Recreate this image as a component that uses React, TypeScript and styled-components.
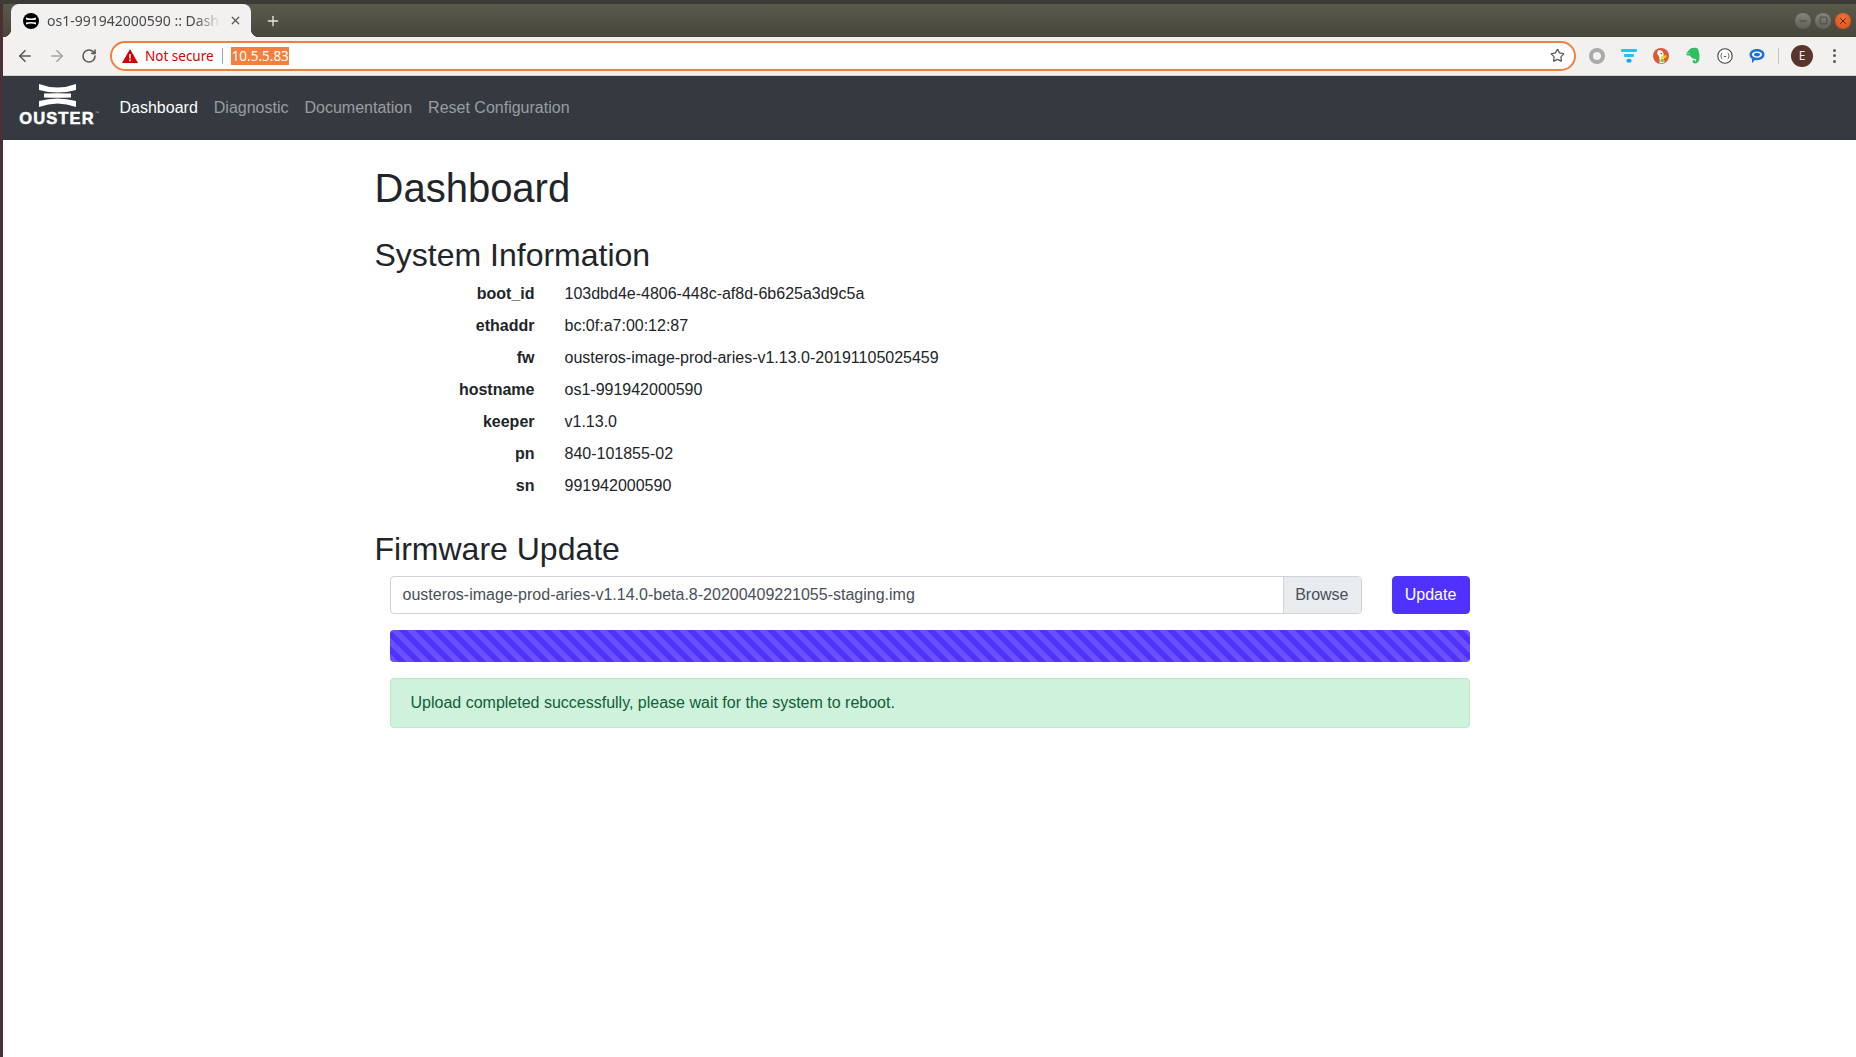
import React from "react";
import styled, { createGlobalStyle } from "styled-components";
import { ArrowLeft, ArrowRight, RotateCw, Star, X, Plus, Minus, Square } from "lucide-react";

const GlobalStyle = createGlobalStyle`
  html, body {
    margin: 0;
    padding: 0;
    height: 100%;
    overflow: hidden;
    background: #fff;
  }
  #root { height: 100%; }
`;

const Screen = styled.div`
  display: flex;
  width: 1856px;
  height: 1057px;
  background: #fff;
`;

const DesktopEdge = styled.div`
  width: 3px;
  flex: none;
  box-sizing: border-box;
  border-top: 4px solid #3c3b37;
  background: #4a2f36;
`;

const Browser = styled.div`
  flex: 1;
  min-width: 0;
  display: flex;
  flex-direction: column;
`;

const TitleBar = styled.div`
  height: 37px;
  flex: none;
  box-sizing: border-box;
  border-top: 4px solid #3c3b37;
  display: flex;
  align-items: flex-end;
  background: linear-gradient(#5a5a4c, #46463c);
`;

const Tab = styled.div`
  position: relative;
  width: 240px;
  height: 33px;
  margin-left: 8px;
  box-sizing: border-box;
  padding: 0 9px 0 12px;
  display: flex;
  align-items: center;
  gap: 8px;
  background: #f2f1f0;
  border-radius: 8px 8px 0 0;
  font: 14px "Noto Sans", sans-serif;
  color: #45494e;

  &::before,
  &::after {
    content: "";
    position: absolute;
    bottom: 0;
    width: 8px;
    height: 8px;
  }
  &::before {
    left: -8px;
    background: radial-gradient(circle at 0 0, transparent 8px, #f2f1f0 8.5px);
  }
  &::after {
    right: -8px;
    background: radial-gradient(circle at 100% 0, transparent 8px, #f2f1f0 8.5px);
  }
`;

const TabTitle = styled.span`
  flex: 1;
  overflow: hidden;
  white-space: nowrap;
  -webkit-mask-image: linear-gradient(90deg, #000 85%, transparent 100%);
  mask-image: linear-gradient(90deg, #000 85%, transparent 100%);
`;

const Favicon = styled.svg`
  width: 16px;
  height: 16px;
  flex: none;
`;

const NewTab = styled.div`
  width: 20px;
  height: 33px;
  margin-left: 12px;
  display: flex;
  align-items: center;
  justify-content: center;
  color: #e6e6e0;
`;

const WindowButtons = styled.div`
  margin-left: auto;
  height: 33px;
  padding-right: 5px;
  display: flex;
  align-items: center;
  gap: 4px;
`;

const WindowButton = styled.div<{ $close?: boolean }>`
  width: 16px;
  height: 16px;
  border-radius: 50%;
  display: flex;
  align-items: center;
  justify-content: center;
  color: ${(p) => (p.$close ? "#5a1e08" : "#3f3f38")};
  background: ${(p) =>
    p.$close
      ? "radial-gradient(circle at 50% 35%, #f0773a, #d9480f)"
      : "linear-gradient(#85857b, #5f5f56)"};
`;

const Toolbar = styled.div`
  height: 39px;
  flex: none;
  box-sizing: border-box;
  padding: 0 0 1px 6px;
  display: flex;
  align-items: center;
  background: #f2f1f0;
  border-bottom: 1px solid #d5d4d2;
`;

const NavButton = styled.div<{ $muted?: boolean }>`
  width: 32px;
  height: 32px;
  flex: none;
  display: flex;
  align-items: center;
  justify-content: center;
  color: ${(p) => (p.$muted ? "#a4a4a4" : "#5a5a5a")};
`;

const AddressBar = styled.div`
  width: 1466px;
  height: 30px;
  flex: none;
  margin-left: 5px;
  box-sizing: border-box;
  padding: 0 9px 0 10px;
  display: flex;
  align-items: center;
  background: #fff;
  border: 2px solid #f0803c;
  border-radius: 15px;
  font: 13.5px "Noto Sans", sans-serif;
`;

const NotSecure = styled.span`
  margin-left: 7px;
  color: #d50000;
`;

const Divider = styled.span`
  width: 1px;
  height: 16px;
  margin: 0 8px 0 8px;
  background: #a8a8a8;
`;

const SelectedUrl = styled.span`
  padding: 0 0 0 1px;
  background: #f5803e;
  color: #fff;
  line-height: 18px;
`;

const StarSlot = styled.div`
  margin-left: auto;
  display: flex;
  color: #5a5a5a;
`;

const Extensions = styled.div`
  flex: 1;
  display: flex;
  align-items: center;
  padding-left: 5px;
`;

const ExtensionSlot = styled.div`
  width: 32px;
  height: 28px;
  flex: none;
  display: flex;
  align-items: center;
  justify-content: center;
`;

const ToolbarSeparator = styled.div`
  width: 1px;
  height: 16px;
  margin: 0 12px 0 5px;
  background: #c9c8c6;
`;

const Avatar = styled.div`
  width: 22px;
  height: 22px;
  flex: none;
  border-radius: 50%;
  display: flex;
  align-items: center;
  justify-content: center;
  background: #5a352b;
  color: #eee;
  font: 12px "Noto Sans", sans-serif;
`;

const Dots = styled.div`
  margin-left: 20px;
  display: flex;
  flex-direction: column;
  gap: 2.5px;
`;

const Dot = styled.span`
  width: 3px;
  height: 3px;
  border-radius: 50%;
  background: #5a5a5a;
`;

const Navbar = styled.nav`
  height: 64px;
  flex: none;
  box-sizing: border-box;
  padding: 0 16px;
  display: flex;
  align-items: center;
  background: #343a40;
  font: 16px/24px "Liberation Sans", Arial, sans-serif;
`;

const Brand = styled.div`
  width: 76px;
  margin: -7px 16.5px 0 0;
  display: flex;
  flex-direction: column;
  align-items: center;
  gap: 4px;
`;

const BrandMark = styled.svg`
  width: 37px;
  height: 23px;
  display: block;
`;

const BrandName = styled.span`
  position: relative;
  font: 700 16.5px/14px "Liberation Sans", Arial, sans-serif;
  letter-spacing: 1.1px;
  color: #fff;
  -webkit-text-stroke: 0.5px #fff;
`;

const BrandTrademark = styled.span`
  position: absolute;
  top: -1px;
  right: -4px;
  font: 400 4px/5px "Liberation Sans", Arial, sans-serif;
  letter-spacing: 0;
  color: #c8cacc;
  -webkit-text-stroke: 0;
`;

const NavLink = styled.a<{ $active?: boolean }>`
  padding: 8px;
  color: ${(p) => (p.$active ? "#fff" : "rgba(255,255,255,.5)")};
`;

const Page = styled.main`
  width: 1140px;
  box-sizing: border-box;
  margin: 0 auto;
  padding: 24px 15px 0;
  color: #212529;
  font: 16px/24px "Liberation Sans", Arial, sans-serif;
`;

const Title = styled.h1`
  margin: 0 0 24px;
  font-size: 40px;
  font-weight: 500;
  line-height: 48px;
`;

const Section = styled.h2`
  margin: 0 0 8px;
  font-size: 32px;
  font-weight: 500;
  line-height: 38px;
`;

const InfoList = styled.dl`
  margin: 0 0 32px;
  display: grid;
  grid-template-columns: 160px 1fr;
  column-gap: 30px;
  row-gap: 8px;
`;

const InfoKey = styled.dt`
  font-weight: 700;
  text-align: right;
`;

const InfoValue = styled.dd`
  margin: 0;
`;

const UpdatePanel = styled.div`
  padding: 0 15px;
  display: flex;
  flex-direction: column;
  gap: 16px;
`;

const UploadRow = styled.div`
  display: flex;
  gap: 30px;
`;

const FileInput = styled.div`
  flex: 1;
  height: 38px;
  box-sizing: border-box;
  display: flex;
  overflow: hidden;
  background: #fff;
  border: 1px solid #ced4da;
  border-radius: 4px;
  color: #495057;
`;

const FileName = styled.span`
  flex: 1;
  padding: 6px 12px;
  line-height: 24px;
`;

const BrowseLabel = styled.span`
  padding: 6px 12px 6px 11px;
  line-height: 24px;
  background: #e9ecef;
  border-left: 1px solid #ced4da;
`;

const UpdateButton = styled.button`
  width: 78px;
  height: 38px;
  padding: 0;
  background: #4f32ff;
  border: 1px solid #4f32ff;
  border-radius: 4px;
  color: #fff;
  font: inherit;
`;

const Progress = styled.div`
  height: 32px;
  border-radius: 4px;
  background-color: #4f32ff;
  background-image: linear-gradient(
    45deg,
    rgba(255, 255, 255, 0.15) 25%,
    transparent 25%,
    transparent 50%,
    rgba(255, 255, 255, 0.15) 50%,
    rgba(255, 255, 255, 0.15) 75%,
    transparent 75%,
    transparent
  );
  background-size: 16px 16px;
`;

const Alert = styled.div`
  padding: 12px 20px;
  background: #cff2dc;
  border: 1px solid #b9ebc9;
  border-radius: 4px;
  color: #0f6036;
`;

const info: [string, string][] = [
  ["boot_id", "103dbd4e-4806-448c-af8d-6b625a3d9c5a"],
  ["ethaddr", "bc:0f:a7:00:12:87"],
  ["fw", "ousteros-image-prod-aries-v1.13.0-20191105025459"],
  ["hostname", "os1-991942000590"],
  ["keeper", "v1.13.0"],
  ["pn", "840-101855-02"],
  ["sn", "991942000590"],
];

function OusterMark() {
  return (
    <>
      <path d="M0 0Q18.5 7 37 0V6Q18.5 11 0 6Z" fill="#fff" />
      <path d="M5 9.5Q18.5 8.8 32 9.5V13.5Q18.5 14.2 5 13.5Z" fill="#fff" />
      <path d="M0 23Q18.5 16 37 23V17Q18.5 12 0 17Z" fill="#fff" />
    </>
  );
}

function App() {
  return (
    <Screen>
      <GlobalStyle />
      <DesktopEdge />
      <Browser>
        <TitleBar>
          <Tab>
            <Favicon viewBox="0 0 16 16">
              <circle cx="8" cy="8" r="8" fill="#000" />
              <path d="M3 4.6Q8 6.4 13 4.6V6.6Q8 7.6 3 6.6ZM3 11.4Q8 9.6 13 11.4V9.4Q8 8.4 3 9.4Z" fill="#fff" />
            </Favicon>
            <TabTitle>os1-991942000590 :: Dashboard</TabTitle>
            <X size={13} strokeWidth={2.4} color="#55585c" />
          </Tab>
          <NewTab>
            <Plus size={16} strokeWidth={2} />
          </NewTab>
          <WindowButtons>
            <WindowButton><Minus size={10} strokeWidth={2} /></WindowButton>
            <WindowButton><Square size={9} strokeWidth={2} /></WindowButton>
            <WindowButton $close><X size={10} strokeWidth={2.4} /></WindowButton>
          </WindowButtons>
        </TitleBar>
        <Toolbar>
          <NavButton><ArrowLeft size={18} strokeWidth={2.2} /></NavButton>
          <NavButton $muted><ArrowRight size={18} strokeWidth={2.2} /></NavButton>
          <NavButton><RotateCw size={16} strokeWidth={2.4} /></NavButton>
          <AddressBar>
            <svg width="16" height="14" viewBox="0 0 16 14">
              <path d="M8 0L16 14H0Z" fill="#d50000" />
              <rect x="7.2" y="5" width="1.6" height="4.5" fill="#fff" />
              <rect x="7.2" y="10.5" width="1.6" height="1.6" fill="#fff" />
            </svg>
            <NotSecure>Not secure</NotSecure>
            <Divider />
            <SelectedUrl>10.5.5.83</SelectedUrl>
            <StarSlot><Star size={15} strokeWidth={2} /></StarSlot>
          </AddressBar>
          <Extensions>
            <ExtensionSlot>
              <svg width="16" height="16" viewBox="0 0 16 16">
                <circle cx="8" cy="8" r="6" fill="none" stroke="#a9a9a9" strokeWidth="4" />
              </svg>
            </ExtensionSlot>
            <ExtensionSlot>
              <svg width="16" height="14" viewBox="0 0 16 14">
                <rect x="0" y="0" width="16" height="3" rx="1" fill="#19c8f0" />
                <rect x="3" y="5" width="10" height="3" rx="1" fill="#19c8f0" />
                <rect x="5.5" y="10" width="5" height="3.5" rx="1.5" fill="#1d9ff0" />
              </svg>
            </ExtensionSlot>
            <ExtensionSlot>
              <svg width="16" height="16" viewBox="0 0 16 16">
                <circle cx="8" cy="8" r="8" fill="#de5833" />
                <path d="M5 2.5C8.5 1.2 11 4 10.6 8L11.5 14.5 6.5 15.6C7 11 6.5 8 4 5.5Z" fill="#fff" />
                <path d="M8 8.5L13.5 7V9.5L8 11Z" fill="#fdd20a" />
                <path d="M7.5 11.5L11 11 10.5 14 7.5 13.5Z" fill="#65bc46" />
                <circle cx="8.2" cy="5.6" r="0.8" fill="#2d4f8e" />
              </svg>
            </ExtensionSlot>
            <ExtensionSlot>
              <svg width="16" height="18" viewBox="0 0 16 18">
                <path d="M4 3L6.5.8V3.5L4 6H1.5ZM6 1.5C8 .5 12 .5 13 2 14.5 6 15 10 14 13.5 13 16.5 10 17 8.5 16 7 15 7.5 12.5 9.5 13L10 14.5C11 14.5 11.5 13.5 11 12 8.5 12 6 11 5 8.5H2.5C1.5 8 1 7 1 6.5H4.5Z" fill="#2dbe60" />
              </svg>
            </ExtensionSlot>
            <ExtensionSlot>
              <svg width="16" height="16" viewBox="0 0 16 16">
                <circle cx="8" cy="8" r="7.2" fill="#fff" stroke="#444" strokeWidth="1.1" />
                <path d="M5.2 5C4.2 5 4.6 7.6 3.6 8 4.6 8.4 4.2 11 5.2 11M10.8 5C11.8 5 11.4 7.6 12.4 8 11.4 8.4 11.8 11 10.8 11M6.8 8.5H9.2" fill="none" stroke="#444" strokeWidth="0.9" />
              </svg>
            </ExtensionSlot>
            <ExtensionSlot>
              <svg width="16" height="16" viewBox="0 0 16 16">
                <path d="M8 1C12.4 1 15.5 3.4 15.5 6.6S12.4 12.2 8 12.2C7.2 12.2 6.5 12.1 5.8 12L3 15.2V10.9C1.4 9.9.5 8.4.5 6.6.5 3.4 3.6 1 8 1Z" fill="#1d6fdc" />
                <ellipse cx="8" cy="6.6" rx="5" ry="3.2" fill="#fff" />
                <ellipse cx="8" cy="6.6" rx="3" ry="1.8" fill="#1d6fdc" />
              </svg>
            </ExtensionSlot>
            <ToolbarSeparator />
            <Avatar>E</Avatar>
            <Dots><Dot /><Dot /><Dot /></Dots>
          </Extensions>
        </Toolbar>
        <Navbar>
          <Brand>
            <BrandMark viewBox="0 0 37 23"><OusterMark /></BrandMark>
            <BrandName>OUSTER<BrandTrademark>™</BrandTrademark></BrandName>
          </Brand>
          <NavLink $active>Dashboard</NavLink>
          <NavLink>Diagnostic</NavLink>
          <NavLink>Documentation</NavLink>
          <NavLink>Reset Configuration</NavLink>
        </Navbar>
        <Page>
          <Title>Dashboard</Title>
          <Section>System Information</Section>
          <InfoList>
            {info.map(([key, value]) => (
              <React.Fragment key={key}>
                <InfoKey>{key}</InfoKey>
                <InfoValue>{value}</InfoValue>
              </React.Fragment>
            ))}
          </InfoList>
          <Section>Firmware Update</Section>
          <UpdatePanel>
            <UploadRow>
              <FileInput>
                <FileName>ousteros-image-prod-aries-v1.14.0-beta.8-20200409221055-staging.img</FileName>
                <BrowseLabel>Browse</BrowseLabel>
              </FileInput>
              <UpdateButton>Update</UpdateButton>
            </UploadRow>
            <Progress />
            <Alert>Upload completed successfully, please wait for the system to reboot.</Alert>
          </UpdatePanel>
        </Page>
      </Browser>
    </Screen>
  );
}

export default App;
